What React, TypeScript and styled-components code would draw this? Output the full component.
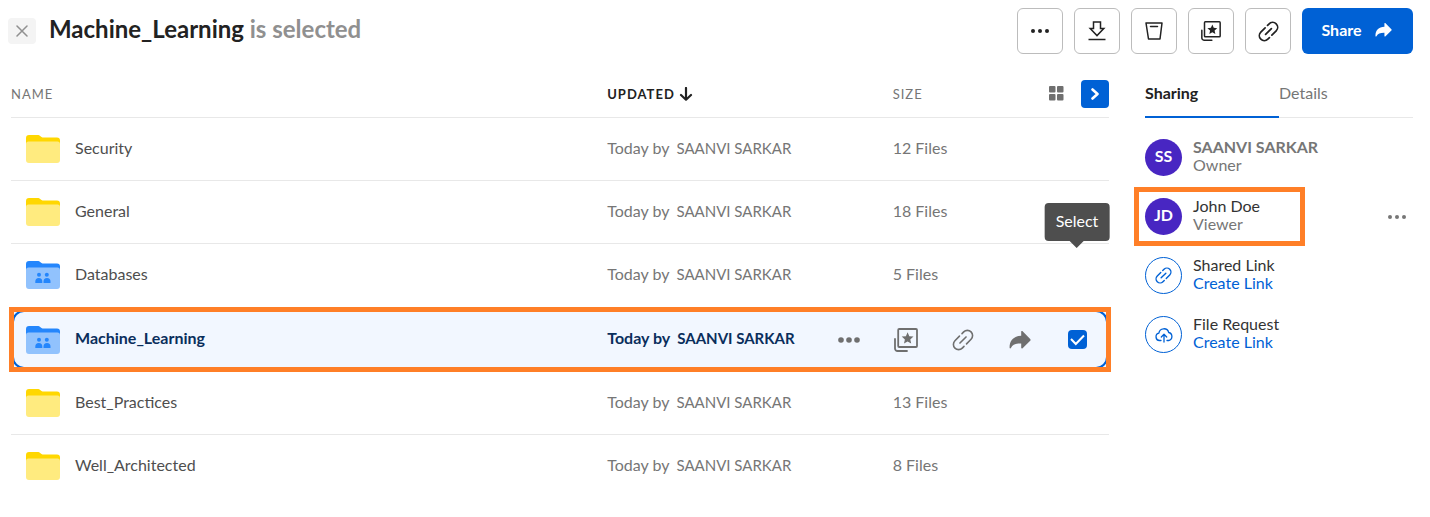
import React from "react";
import styled, { createGlobalStyle, css } from "styled-components";

const blue = "#0061d5";
const orange = "#ff7f27";

const GlobalStyle = createGlobalStyle`
  *, *::before, *::after { box-sizing: border-box; }
  body {
    margin: 0;
    background: #fff;
    color: #4e4e4e;
    font-family: Lato, "Liberation Sans", sans-serif;
    font-size: 16px;
    line-height: 20px;
  }
  button { font: inherit; color: inherit; padding: 0; border: 0; background: none; cursor: pointer; }
  svg { display: block; }
`;

const Page = styled.div`
  padding: 8px 17px 20px 8px;
`;

const TopBar = styled.header`
  display: flex;
  align-items: center;
  justify-content: space-between;
`;

const Selection = styled.div`
  display: flex;
  align-items: center;
  gap: 13px;
`;

const CloseButton = styled.button`
  display: grid;
  place-items: center;
  width: 28px;
  height: 26px;
  border-radius: 4px;
  background: #f4f4f4;
  color: #909090;
`;

const Title = styled.h1`
  margin: 0 0 4px;
  font-size: 24px;
  line-height: 30px;
  font-weight: 700;
  color: #222;
`;

const TitleNote = styled.span`
  color: #909090;
`;

const Toolbar = styled.div`
  display: flex;
  gap: 11px;
`;

const ToolButton = styled.button`
  display: grid;
  place-items: center;
  width: 46px;
  height: 46px;
  border: 1px solid #bcbcbc;
  border-radius: 6px;
  color: #222;
`;

const ShareButton = styled.button`
  display: flex;
  align-items: center;
  justify-content: center;
  gap: 13px;
  width: 111px;
  height: 46px;
  padding: 0 2px 2px 0;
  border-radius: 6px;
  background: ${blue};
  color: #fff;
  font-weight: 700;
`;

const Main = styled.main`
  display: flex;
  align-items: flex-start;
  gap: 36px;
  margin: 16px 0 0 3px;
`;

const FilesPanel = styled.section`
  flex: 1;
  min-width: 0;
`;

const Files = styled.table`
  width: 100%;
  table-layout: fixed;
  border-spacing: 0;
`;

const NameCol = styled.col`
  width: 54.3%;
`;

const UpdatedCol = styled.col`
  width: 26%;
`;

const HeadCell = styled.th<{ $sorted?: boolean }>`
  height: 48px;
  padding: 0;
  border-bottom: 1px solid #e8e8e8;
  text-align: left;
  font-size: 13px;
  letter-spacing: 1px;
  font-weight: ${(p) => (p.$sorted ? 700 : 400)};
  color: ${(p) => (p.$sorted ? "#222" : "#767676")};
`;

const HeadContent = styled.div`
  display: flex;
  align-items: center;
  gap: 4px;
`;

const ViewButtons = styled.div`
  display: flex;
  align-items: center;
  gap: 17px;
  margin-left: auto;
`;

const ViewButton = styled.button`
  color: #6f6f6f;
`;

const PanelButton = styled.button`
  display: grid;
  place-items: center;
  width: 28px;
  height: 28px;
  border-radius: 4px;
  background: ${blue};
  color: #fff;
`;

const Cell = styled.td<{ $muted?: boolean }>`
  height: 63px;
  padding: 0;
  border-bottom: 1px solid #e8e8e8;
  color: ${(p) => (p.$muted ? "#767676" : "#4e4e4e")};
`;

const Label = styled.span`
  display: block;
  padding-bottom: 2px;
`;

const Person = styled(Label)`
  font-size: 15px;
`;

const Row = styled.tr<{ $selected?: boolean; $plain?: boolean }>`
  ${(p) => p.$plain && css`${Cell} { border-bottom-color: transparent; }`}
  ${(p) =>
    p.$selected &&
    css`
      position: relative;
      background: #f2f7ff;
      font-weight: 700;
      ${Cell} { height: 65px; border-bottom: 0; color: #0a2e5c; }
      ${Label} { padding-bottom: 4px; }
      ${Cell}:first-child::before,
      ${Cell}:first-child::after {
        content: "";
        position: absolute;
        pointer-events: none;
      }
      ${Cell}:first-child::before {
        inset: 3px 1px;
        border: 2px solid ${blue};
        border-radius: 12px;
      }
      ${Cell}:first-child::after {
        inset: 0 -2px;
        border: 5px solid ${orange};
      }
    `}
`;

const FileName = styled.div`
  display: flex;
  align-items: center;
  gap: 15px;
  padding-left: 15px;
`;

const Updated = styled.div`
  display: flex;
  align-items: center;
  gap: 7px;
`;

const RowActions = styled.div`
  display: flex;
  align-items: center;
  gap: 33px;
  margin-left: auto;
  padding-right: 20px;
  color: #6f6f6f;
`;

const RowAction = styled.button`
  display: grid;
  place-items: center;
  width: 24px;
  height: 24px;
`;

const CheckWrap = styled.label`
  position: relative;
  display: grid;
  place-items: center;
  width: 24px;
  height: 24px;
  color: #fff;
  > * { grid-area: 1 / 1; }
  svg { position: relative; pointer-events: none; }
`;

const Check = styled.input`
  appearance: none;
  width: 19px;
  height: 19px;
  margin: 0;
  border-radius: 4px;
  background: ${blue};
`;

const Tooltip = styled.span`
  position: absolute;
  left: 50%;
  bottom: 111px;
  transform: translateX(-50%);
  padding: 8px 11px 10px;
  border-radius: 4px;
  background: #4e4e4e;
  font-weight: 400;
  color: #fff;
  &::after {
    content: "";
    position: absolute;
    top: 100%;
    left: 50%;
    margin-left: -7px;
    border: 7px solid transparent;
    border-top-color: #4e4e4e;
    border-bottom: 0;
  }
`;

const Sidebar = styled.aside`
  width: 268px;
`;

const Tabs = styled.div`
  display: flex;
  margin-bottom: 10px;
`;

const Tab = styled.button<{ $active?: boolean }>`
  flex: 1;
  height: 48px;
  padding-bottom: ${(p) => (p.$active ? "0" : "1px")};
  border-bottom: ${(p) => (p.$active ? `2px solid ${blue}` : "1px solid #e8e8e8")};
  text-align: left;
  font-weight: ${(p) => (p.$active ? 700 : 400)};
  color: ${(p) => (p.$active ? "#222" : "#767676")};
`;

const Entry = styled.div`
  display: flex;
  align-items: center;
  gap: 11px;
  height: 59px;
`;

const Highlight = styled.div`
  position: relative;
  width: 160px;
  &::after {
    content: "";
    position: absolute;
    inset: 0 0 0 -11px;
    border: 5px solid ${orange};
    pointer-events: none;
  }
`;

const Avatar = styled.span<{ $outline?: boolean }>`
  display: grid;
  place-items: center;
  width: 37px;
  height: 37px;
  border-radius: 50%;
  font-weight: 700;
  ${(p) =>
    p.$outline
      ? css`border: 1px solid ${blue}; color: ${blue};`
      : css`padding-bottom: 3px; background: #4826c2; color: #fff;`}
`;

const EntryText = styled.div`
  display: flex;
  flex-direction: column;
  padding-bottom: 4px;
  line-height: 18px;
  color: #767676;
`;

const EntryName = styled.span<{ $bold?: boolean }>`
  font-weight: ${(p) => (p.$bold ? 700 : 400)};
  color: ${(p) => (p.$bold ? "#767676" : "#333")};
`;

const EntryLink = styled.a`
  color: ${blue};
  text-decoration: none;
`;

const MoreButton = styled.button`
  margin-left: auto;
  padding-right: 5px;
  color: #767676;
`;

const PersonRow = styled.div`
  display: flex;
  align-items: center;
`;

const Dots = ({ r = 2, step = 7 }: { r?: number; step?: number }) => (
  <svg width="22" height="6" viewBox="-11 -3 22 6" fill="currentColor">
    {[-step, 0, step].map((x) => <circle key={x} cx={x} cy="0" r={r} />)}
  </svg>
);

const LinkIcon = ({ size = 22, width = 1.6 }: { size?: number; width?: number }) => (
  <svg width={size} height={size} viewBox="-11 -11 22 22" fill="none" stroke="currentColor" strokeWidth={width} strokeLinecap="round">
    <g transform="rotate(-45)">
      <path d="M-4.300 0H4.300" />
      <path d="M3.800-5.200H6.200a5.200 5.200 0 0 1 0 10.400H-.2" />
      <path d="M-3.800 5.200H-6.200a5.200 5.200 0 0 1 0-10.400H.2" />
    </g>
  </svg>
);

const CollectionIcon = ({ size = 22 }: { size?: number }) => (
  <svg width={size} height={size} viewBox="0 0 24 24" fill="none" stroke="currentColor" strokeWidth="1.800" strokeLinecap="round">
    <rect x="4.200" y="1" width="18.800" height="18" rx="1" />
    <path d="M1 11v9.500A2.500 2.500 0 0 0 3.500 23H13" />
    <path d="m13.600 4.300 1.700 3.900 4.200.4-3.200 2.800.9 4.200-3.600-2.200-3.600 2.200.9-4.200-3.200-2.800 4.200-.4z" fill="currentColor" stroke="none" />
  </svg>
);

const ShareIcon = ({ width = 18 }: { width?: number }) => (
  <svg width={width} height={(width * 18) / 22} viewBox="0 0 22 18" fill="currentColor">
    <path d="M12.2.7v4.1C4.600 5 .4 9.400.6 16.700c0 .9.900 1 1.300.3 2-3.500 5-4.600 10.300-4.500v4.200c0 .8.800 1.100 1.400.6l7.600-7.600c.5-.5.500-1.100 0-1.600L13.600.2c-.6-.5-1.400-.3-1.400.5z" />
  </svg>
);

const DownloadIcon = () => (
  <svg width="18" height="20" viewBox="0 0 18 20" fill="none" stroke="currentColor" strokeWidth="1.500">
    <path d="M5.500 1h7v6.500h3.300L9 14.600 2.200 7.500h3.300z" />
    <path d="M.5 18.500h17" />
  </svg>
);

const TrashIcon = () => (
  <svg width="18" height="18" viewBox="0 0 18 18" fill="none" stroke="currentColor" strokeWidth="1.500" strokeLinecap="round" strokeLinejoin="round">
    <path d="M1 1h16l-2 16H3.500z" />
    <path d="M5.500 4.500h7" />
  </svg>
);

const FolderIcon = ({ shared }: { shared?: boolean }) => (
  <svg width="34" height="28" viewBox="0 0 34 28">
    <path d="M0 12V3a3 3 0 0 1 3-3h9.500c1.500 0 2.500 2.500 4 2.500H31a3 3 0 0 1 3 3V12z" fill={shared ? "#2486fc" : "#ffd700"} />
    <path d="M0 9a2.500 2.500 0 0 1 2.500-2.500h29A2.500 2.500 0 0 1 34 9v16a3 3 0 0 1-3 3H3a3 3 0 0 1-3-3z" fill={shared ? "#91c2fd" : "#ffeb7f"} />
    {shared && (
      <g fill="#2486fc">
        <circle cx="13" cy="13.800" r="2" />
        <circle cx="20.800" cy="13.800" r="2" />
        <path d="M9.300 22v-1.500a3.500 3.500 0 0 1 7 0V22zM17.500 22v-1.500a3.500 3.500 0 0 1 7 0V22z" />
      </g>
    )}
  </svg>
);

const UploadCloudIcon = () => (
  <svg width="18" height="16" viewBox="0 0 18 16" fill="none" stroke="currentColor" strokeWidth="1.300" strokeLinecap="round" strokeLinejoin="round">
    <path d="M6 13.500H4.500a3.700 3.700 0 0 1-.6-7.300A5 5 0 0 1 13.700 5.500a4.100 4.100 0 0 1 0 8H12" />
    <path d="M9 15V7.500M6.300 10 9 7.300l2.700 2.700" />
  </svg>
);

const files = [
  { name: "Security", size: "12 Files" },
  { name: "General", size: "18 Files" },
  { name: "Databases", size: "5 Files", shared: true, plain: true },
  { name: "Machine_Learning", size: "", shared: true, selected: true },
  { name: "Best_Practices", size: "13 Files" },
  { name: "Well_Architected", size: "8 Files", plain: true },
];

export default function App() {
  return (
    <Page>
      <GlobalStyle />
      <TopBar>
        <Selection>
          <CloseButton aria-label="Clear selection">
            <svg width="12" height="12" viewBox="0 0 12 12" stroke="currentColor" strokeWidth="1.500" strokeLinecap="round">
              <path d="M1 1l10 10M11 1 1 11" />
            </svg>
          </CloseButton>
          <Title>Machine_Learning <TitleNote>is selected</TitleNote></Title>
        </Selection>
        <Toolbar>
          <ToolButton aria-label="More options"><Dots /></ToolButton>
          <ToolButton aria-label="Download"><DownloadIcon /></ToolButton>
          <ToolButton aria-label="Trash"><TrashIcon /></ToolButton>
          <ToolButton aria-label="Add to collection"><CollectionIcon size={20} /></ToolButton>
          <ToolButton aria-label="Copy link"><LinkIcon size={21} width={1.8} /></ToolButton>
          <ShareButton>Share <ShareIcon width={17} /></ShareButton>
        </Toolbar>
      </TopBar>
      <Main>
        <FilesPanel>
          <Files>
            <colgroup><NameCol /><UpdatedCol /><col /></colgroup>
            <thead>
              <tr>
                <HeadCell>NAME</HeadCell>
                <HeadCell $sorted aria-sort="descending">
                  <HeadContent>
                    UPDATED
                    <svg width="14" height="14" viewBox="0 0 14 14" fill="none" stroke="currentColor" strokeWidth="2.200" strokeLinecap="round" strokeLinejoin="round">
                      <path d="M7 1v11.500M2 8l5 4.700L12 8" />
                    </svg>
                  </HeadContent>
                </HeadCell>
                <HeadCell>
                  <HeadContent>
                    SIZE
                    <ViewButtons>
                      <ViewButton aria-label="Grid view">
                        <svg width="15" height="15" viewBox="0 0 15 15" fill="currentColor">
                          {[0, 8].map((y) => [0, 8].map((x) => <rect key={`${x}-${y}`} x={x} y={y} width="6.500" height="6.500" rx="1" />))}
                        </svg>
                      </ViewButton>
                      <PanelButton aria-label="Hide sidebar">
                        <svg width="8" height="12" viewBox="0 0 8 12" fill="none" stroke="currentColor" strokeWidth="2.600" strokeLinecap="round" strokeLinejoin="round">
                          <path d="M1.500 1.500 6.500 6l-5 4.500" />
                        </svg>
                      </PanelButton>
                    </ViewButtons>
                  </HeadContent>
                </HeadCell>
              </tr>
            </thead>
            <tbody>
              {files.map((file) => (
                <Row key={file.name} $selected={file.selected} $plain={file.plain}>
                  <Cell>
                    <FileName>
                      <FolderIcon shared={file.shared} />
                      <Label>{file.name}</Label>
                    </FileName>
                  </Cell>
                  <Cell $muted colSpan={file.selected ? 2 : 1}>
                    <Updated>
                      <Label>Today by</Label>
                      <Person>SAANVI SARKAR</Person>
                      {file.selected && (
                        <RowActions>
                          <RowAction aria-label="More options"><Dots r={2.8} step={8} /></RowAction>
                          <RowAction aria-label="Add to collection"><CollectionIcon size={24} /></RowAction>
                          <RowAction aria-label="Copy link"><LinkIcon /></RowAction>
                          <RowAction aria-label="Share"><ShareIcon width={22} /></RowAction>
                          <CheckWrap>
                            <Check type="checkbox" defaultChecked aria-label="Select Machine_Learning" />
                            <svg width="15" height="12" viewBox="0 0 15 12" fill="none" stroke="currentColor" strokeWidth="2">
                              <path d="m1 5 4.800 5L14 1.500" />
                            </svg>
                            <Tooltip role="tooltip">Select</Tooltip>
                          </CheckWrap>
                        </RowActions>
                      )}
                    </Updated>
                  </Cell>
                  {!file.selected && <Cell $muted><Label>{file.size}</Label></Cell>}
                </Row>
              ))}
            </tbody>
          </Files>
        </FilesPanel>
        <Sidebar>
          <Tabs role="tablist">
            <Tab role="tab" aria-selected="true" $active>Sharing</Tab>
            <Tab role="tab" aria-selected="false">Details</Tab>
          </Tabs>
          <Entry>
            <Avatar>SS</Avatar>
            <EntryText><EntryName $bold>SAANVI SARKAR</EntryName>Owner</EntryText>
          </Entry>
          <PersonRow>
            <Highlight>
              <Entry>
                <Avatar>JD</Avatar>
                <EntryText><EntryName>John Doe</EntryName>Viewer</EntryText>
              </Entry>
            </Highlight>
            <MoreButton aria-label="Options for John Doe"><Dots /></MoreButton>
          </PersonRow>
          <Entry>
            <Avatar $outline><LinkIcon size={17} width={1.8} /></Avatar>
            <EntryText><EntryName>Shared Link</EntryName><EntryLink href="#shared-link">Create Link</EntryLink></EntryText>
          </Entry>
          <Entry>
            <Avatar $outline><UploadCloudIcon /></Avatar>
            <EntryText><EntryName>File Request</EntryName><EntryLink href="#file-request">Create Link</EntryLink></EntryText>
          </Entry>
        </Sidebar>
      </Main>
    </Page>
  );
}
